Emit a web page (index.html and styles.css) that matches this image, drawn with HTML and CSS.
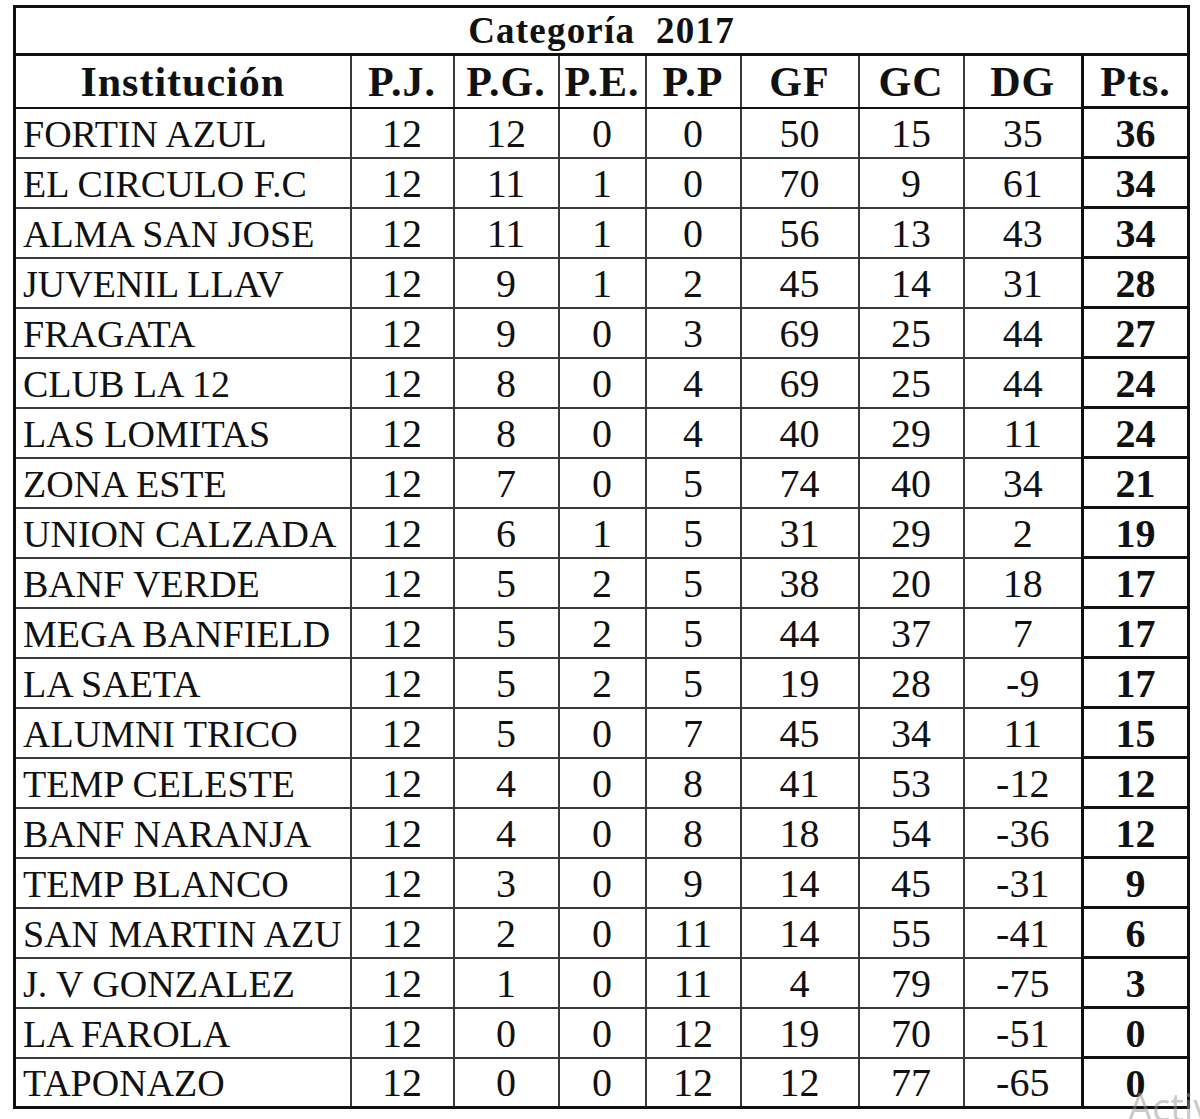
FILE: index.html
```html
<!DOCTYPE html>
<html lang="es">
<head>
<meta charset="utf-8">
<title>Categoría 2017</title>
<link rel="stylesheet" href="styles.css">
</head>
<body>
<table class="standings">
  <colgroup>
    <col class="c-name"><col class="c-pj"><col class="c-pg"><col class="c-pe"><col class="c-pp"><col class="c-gf"><col class="c-gc"><col class="c-dg"><col class="c-pts">
  </colgroup>
  <thead>
    <tr class="title-row"><th colspan="9">Categoría&nbsp;&nbsp;2017</th></tr>
    <tr class="head-row">
      <th>Institución</th><th>P.J.</th><th>P.G.</th><th>P.E.</th><th>P.P</th><th>GF</th><th>GC</th><th>DG</th><th class="pts">Pts.</th>
    </tr>
  </thead>
  <tbody>
    <tr><td class="name">FORTIN AZUL</td><td>12</td><td>12</td><td>0</td><td>0</td><td>50</td><td>15</td><td>35</td><td class="pts">36</td></tr>
    <tr><td class="name">EL CIRCULO F.C</td><td>12</td><td>11</td><td>1</td><td>0</td><td>70</td><td>9</td><td>61</td><td class="pts">34</td></tr>
    <tr><td class="name">ALMA SAN JOSE</td><td>12</td><td>11</td><td>1</td><td>0</td><td>56</td><td>13</td><td>43</td><td class="pts">34</td></tr>
    <tr><td class="name">JUVENIL LLAV</td><td>12</td><td>9</td><td>1</td><td>2</td><td>45</td><td>14</td><td>31</td><td class="pts">28</td></tr>
    <tr><td class="name">FRAGATA</td><td>12</td><td>9</td><td>0</td><td>3</td><td>69</td><td>25</td><td>44</td><td class="pts">27</td></tr>
    <tr><td class="name">CLUB LA 12</td><td>12</td><td>8</td><td>0</td><td>4</td><td>69</td><td>25</td><td>44</td><td class="pts">24</td></tr>
    <tr><td class="name">LAS LOMITAS</td><td>12</td><td>8</td><td>0</td><td>4</td><td>40</td><td>29</td><td>11</td><td class="pts">24</td></tr>
    <tr><td class="name">ZONA ESTE</td><td>12</td><td>7</td><td>0</td><td>5</td><td>74</td><td>40</td><td>34</td><td class="pts">21</td></tr>
    <tr><td class="name">UNION CALZADA</td><td>12</td><td>6</td><td>1</td><td>5</td><td>31</td><td>29</td><td>2</td><td class="pts">19</td></tr>
    <tr><td class="name">BANF VERDE</td><td>12</td><td>5</td><td>2</td><td>5</td><td>38</td><td>20</td><td>18</td><td class="pts">17</td></tr>
    <tr><td class="name">MEGA BANFIELD</td><td>12</td><td>5</td><td>2</td><td>5</td><td>44</td><td>37</td><td>7</td><td class="pts">17</td></tr>
    <tr><td class="name">LA SAETA</td><td>12</td><td>5</td><td>2</td><td>5</td><td>19</td><td>28</td><td>-9</td><td class="pts">17</td></tr>
    <tr><td class="name">ALUMNI TRICO</td><td>12</td><td>5</td><td>0</td><td>7</td><td>45</td><td>34</td><td>11</td><td class="pts">15</td></tr>
    <tr><td class="name">TEMP CELESTE</td><td>12</td><td>4</td><td>0</td><td>8</td><td>41</td><td>53</td><td>-12</td><td class="pts">12</td></tr>
    <tr><td class="name">BANF NARANJA</td><td>12</td><td>4</td><td>0</td><td>8</td><td>18</td><td>54</td><td>-36</td><td class="pts">12</td></tr>
    <tr><td class="name">TEMP BLANCO</td><td>12</td><td>3</td><td>0</td><td>9</td><td>14</td><td>45</td><td>-31</td><td class="pts">9</td></tr>
    <tr><td class="name">SAN MARTIN AZU</td><td>12</td><td>2</td><td>0</td><td>11</td><td>14</td><td>55</td><td>-41</td><td class="pts">6</td></tr>
    <tr><td class="name">J. V GONZALEZ</td><td>12</td><td>1</td><td>0</td><td>11</td><td>4</td><td>79</td><td>-75</td><td class="pts">3</td></tr>
    <tr><td class="name">LA FAROLA</td><td>12</td><td>0</td><td>0</td><td>12</td><td>19</td><td>70</td><td>-51</td><td class="pts">0</td></tr>
    <tr><td class="name">TAPONAZO</td><td>12</td><td>0</td><td>0</td><td>12</td><td>12</td><td>77</td><td>-65</td><td class="pts">0</td></tr>
  </tbody>
</table>
<div class="watermark">Activar Windows</div>
</body>
</html>
```

FILE: styles.css
```css
html, body {
  margin: 0;
  padding: 0;
  background: #ffffff;
  overflow: hidden;
}

body {
  position: relative;
  width: 1200px;
  height: 1119px;
  padding: 5px 0 0 13px;
  box-sizing: border-box;
  font-family: "Liberation Serif", "DejaVu Serif", serif;
  color: #111;
}

.standings {
  border-collapse: collapse;
  table-layout: fixed;
  width: 1174px;
  border: 3px solid #111;
}

.c-name { width: 336px; }
.c-pj { width: 103px; }
.c-pg { width: 105px; }
.c-pe { width: 87px; }
.c-pp { width: 95px; }
.c-gf { width: 118px; }
.c-gc { width: 105px; }
.c-dg { width: 119px; }
.c-pts { width: 106px; }

.standings th,
.standings td {
  border: 2px solid #3a3a3a;
  padding: 0;
  text-align: center;
  vertical-align: middle;
  white-space: nowrap;
  overflow: hidden;
}

.title-row th {
  height: 45px;
  font-size: 37px;
  font-weight: bold;
  letter-spacing: 1.2px;
  border-bottom: 3px solid #111;
  line-height: 1;
}

.head-row th {
  height: 48px;
  font-size: 42px;
  font-weight: bold;
  letter-spacing: 1px;
  border-bottom: 2px solid #111;
  line-height: 1;
  padding-top: 2px;
}

.standings td {
  height: 45px;
  font-size: 40px;
  line-height: 1;
  padding-top: 2px;
}

.standings td.name {
  text-align: left;
  padding-left: 7px;
  font-size: 38px;
}

.standings .pts {
  border: 3px solid #111;
  font-weight: bold;
}

.watermark {
  position: absolute;
  left: 1128px;
  top: 1080px;
  font-family: "Open Sans", "DejaVu Sans", sans-serif;
  font-size: 38px;
  color: rgba(150, 150, 150, 0.5);
  white-space: nowrap;
  pointer-events: none;
}
```
